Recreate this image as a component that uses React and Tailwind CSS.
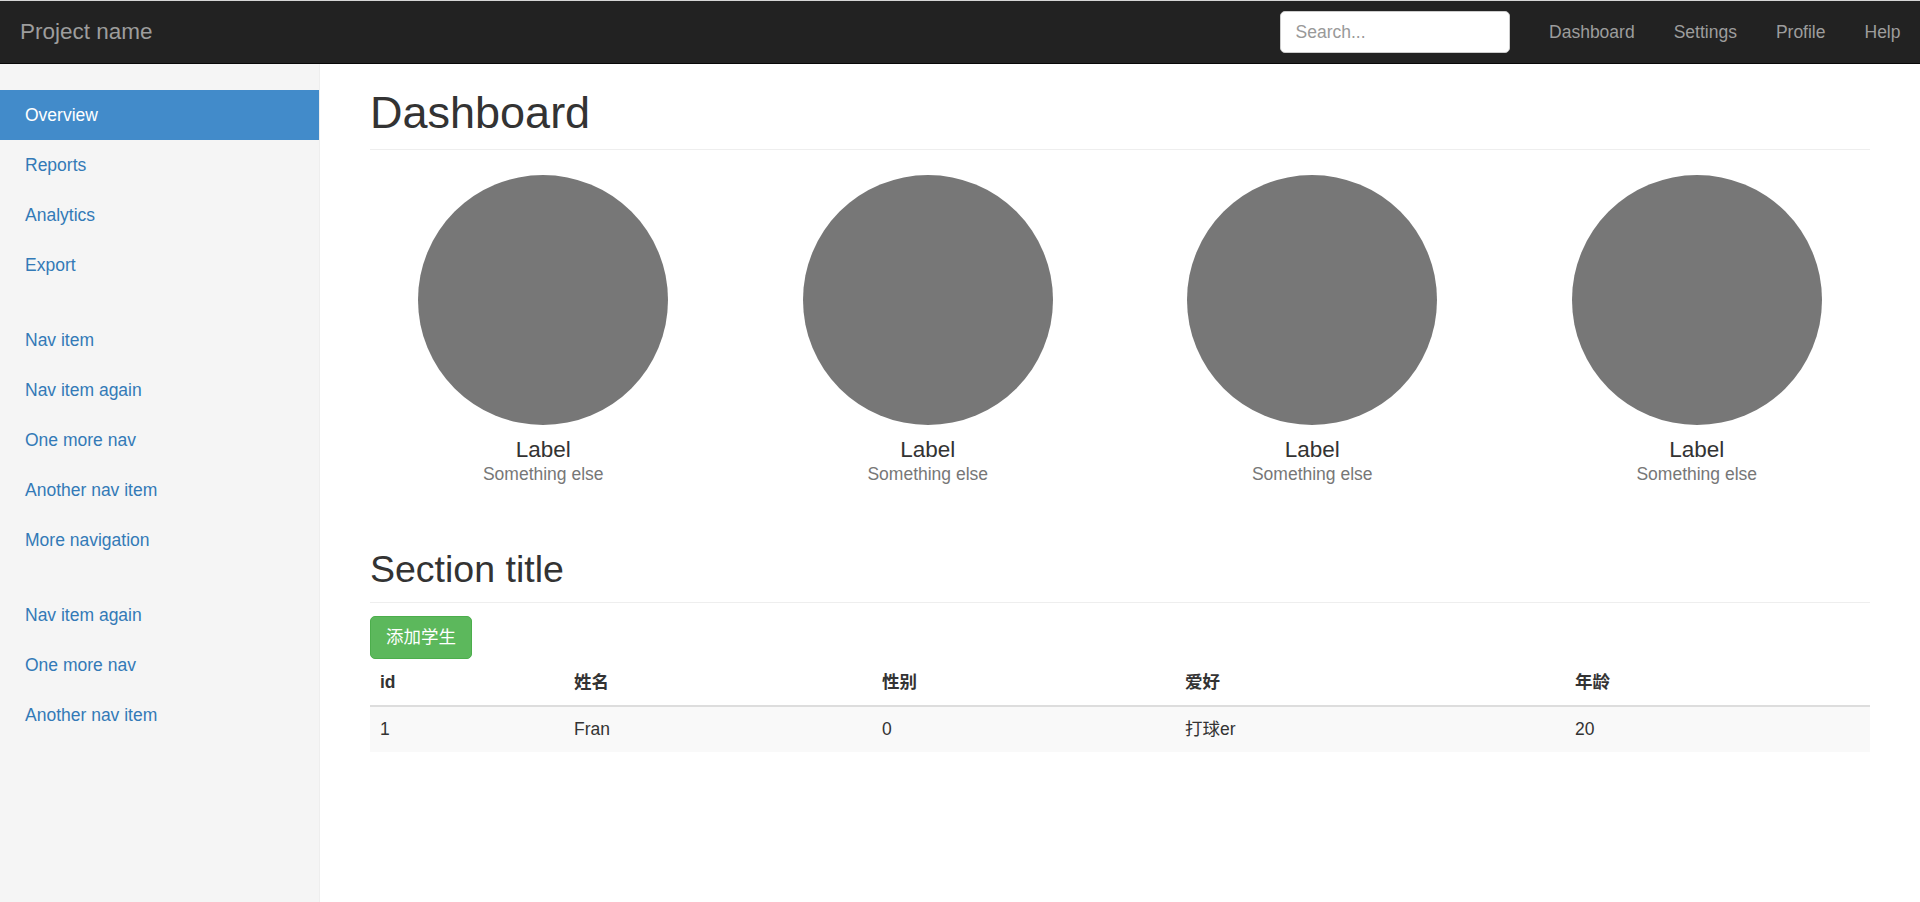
import React from 'react';

const topLinks = ['Dashboard', 'Settings', 'Profile', 'Help'];

const navGroups = [
  ['Overview', 'Reports', 'Analytics', 'Export'],
  ['Nav item', 'Nav item again', 'One more nav', 'Another nav item', 'More navigation'],
  ['Nav item again', 'One more nav', 'Another nav item'],
];

const cols = [
  { label: 'id', w: 'w-[194px]' },
  { label: '姓名', w: 'w-[308px]' },
  { label: '性别', w: 'w-[303px]' },
  { label: '爱好', w: 'w-[390px]' },
  { label: '年龄', w: 'w-[305px]' },
];

const rows = [['1', 'Fran', '0', '打球er', '20']];

const App = () => {
  return (
    <div className="h-[902px] flex flex-col bg-white text-[#333] font-['Liberation_Sans','Noto_Sans_CJK_SC',sans-serif] overflow-hidden">
      {/* ── Top navbar ── */}
      <div className="h-px bg-[#d6d6d6]" />
      <header className="h-[63px] bg-[#222] border-b border-[#080808] flex items-center">
        <a className="pl-[20px] text-[22.5px] text-[#9d9d9d] leading-none">Project name</a>
        <div className="ml-auto flex items-center">
          <div className="mr-[20px]">
            <input
              className="w-[230px] h-[42px] rounded-[5px] bg-white border border-[#ccc] px-[15px] text-[17.5px] placeholder:text-[#999] outline-none"
              placeholder="Search..."
            />
          </div>
          {topLinks.map((l) => (
            <a key={l} className="px-[19.5px] text-[17.5px] text-[#9d9d9d] leading-[62px]">
              {l}
            </a>
          ))}
        </div>
      </header>

      <div className="flex flex-1 min-h-0">
        {/* ── Sidebar ── */}
        <aside className="w-[320px] shrink-0 bg-[#f5f5f5] border-r border-[#eee] pt-[26px]">
          {navGroups.map((group, gi) => (
            <ul key={gi} className="mb-[25px]">
              {group.map((item, i) => {
                const active = gi === 0 && i === 0;
                return (
                  <li
                    key={item + i}
                    className={`h-[50px] flex items-center pl-[25px] text-[17.5px] ${
                      active ? 'bg-[#428bca] text-white' : 'text-[#337ab7]'
                    }`}
                  >
                    {item}
                  </li>
                );
              })}
            </ul>
          ))}
        </aside>

        {/* ── Main ── */}
        <main className="flex-1 px-[50px] pt-[24px]">
          <h1 className="text-[45px] leading-[1.1] pb-[11px] border-b border-[#eee] mb-[25px]">Dashboard</h1>

          <div className="grid grid-cols-4 -mx-[19px] mb-[62px]">
            {[0, 1, 2, 3].map((n) => (
              <div key={n} className="flex flex-col items-center">
                <div className="w-[250px] h-[250px] rounded-full bg-[#777]" />
                <h4 className="mt-[12px] text-[22.5px] leading-[25px]">Label</h4>
                <span className="text-[17.5px] leading-[25px] text-[#777]">Something else</span>
              </div>
            ))}
          </div>

          <h2 className="text-[37.5px] leading-[1.1] pb-[12px] border-b border-[#eee] mb-[13px]">Section title</h2>

          <div>
            <button className="h-[43px] px-[15px] rounded-[5px] bg-[#5cb85c] border border-[#4cae4c] text-white text-[17.5px]">
              添加学生
            </button>
          </div>

          <table className="mt-[1px] w-full table-fixed border-collapse text-[17.5px]">
            <thead>
              <tr>
                {cols.map((c) => (
                  <th key={c.label} className={`${c.w} text-left font-bold px-[10px] py-[10px] leading-[25px] border-b-2 border-[#ddd]`}>
                    {c.label}
                  </th>
                ))}
              </tr>
            </thead>
            <tbody>
              {rows.map((r, ri) => (
                <tr key={ri} className="bg-[#f9f9f9]">
                  {r.map((cell, ci) => (
                    <td key={ci} className="px-[10px] py-[10px] leading-[25px]">
                      {cell}
                    </td>
                  ))}
                </tr>
              ))}
            </tbody>
          </table>
        </main>
      </div>
    </div>
  );
};

export default App;
